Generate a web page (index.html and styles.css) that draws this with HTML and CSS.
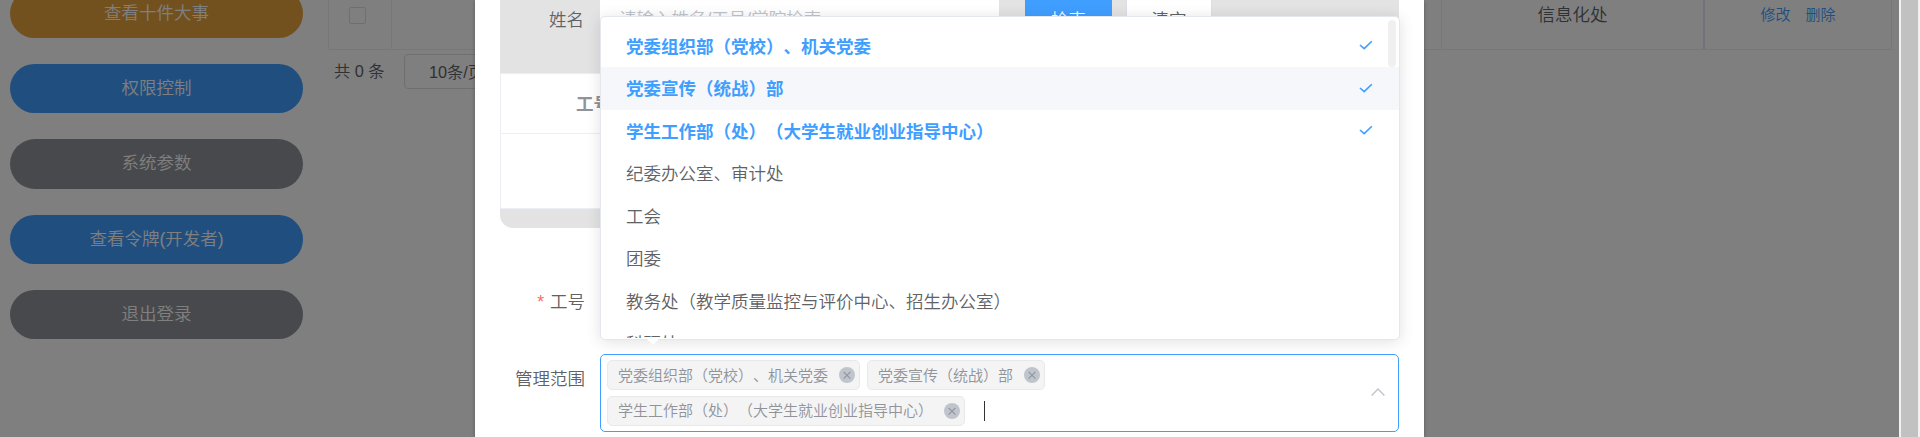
FILE: index.html
```html
<!DOCTYPE html>
<html lang="zh-CN">
<head>
<meta charset="utf-8">
<title>权限控制</title>
<link rel="stylesheet" href="styles.css">
</head>
<body>
<svg class="defs" aria-hidden="true">
  <symbol id="check" viewBox="0 0 14 10"><path d="M1 5l4.2 3.6L12.8 1.2" fill="none" stroke="currentColor" stroke-width="1.6"/></symbol>
  <symbol id="close" viewBox="0 0 16 16"><circle cx="8" cy="8" r="8" fill="#c0c4cc"/><path d="M4.6 4.9l6.8 6.8M11.4 4.9l-6.8 6.8" fill="none" stroke="#909399" stroke-width="1.1"/></symbol>
</svg>
<div class="page">
  <nav class="sidebar">
    <button class="nav-btn warning">查看十件大事</button>
    <button class="nav-btn primary">权限控制</button>
    <button class="nav-btn info">系统参数</button>
    <button class="nav-btn primary">查看令牌(开发者)</button>
    <button class="nav-btn info">退出登录</button>
  </nav>
  <main class="main">
    <div class="grid-row">
      <div class="cell"><span class="checkbox"></span></div>
      <div class="cell"></div>
      <div class="cell">信息化处</div>
      <div class="cell actions"><a>修改</a><a>删除</a></div>
    </div>
    <div class="pagination"><span class="total">共 0 条</span><span class="page-size">10条/页</span></div>
  </main>
</div>
<div class="overlay"></div>
<div class="scrollbar"><div class="scroll-thumb"></div></div>
<section class="dialog">
  <div class="panel">
    <div class="search-row">
      <label class="search-label">姓名</label>
      <div class="search-input">请输入姓名/工号/学院检索</div>
      <button class="btn btn-primary">检索</button>
      <button class="btn btn-plain">清空</button>
    </div>
    <div class="table">
      <div class="table-head">工号</div>
      <div class="table-body"></div>
    </div>
  </div>
  <div class="form-item item-id"><label class="form-label"><span class="star">*</span>工号</label></div>
  <div class="form-item">
    <label class="form-label">管理范围</label>
    <div class="select">
      <div class="tags">
        <span class="tag"><span class="tag-text">党委组织部（党校）、机关党委</span><svg class="close"><use href="#close"/></svg></span>
        <span class="tag"><span class="tag-text">党委宣传（统战）部</span><svg class="close"><use href="#close"/></svg></span>
        <span class="tag"><span class="tag-text">学生工作部（处）（大学生就业创业指导中心）</span><svg class="close"><use href="#close"/></svg></span>
        <span class="caret"></span>
      </div>
      <svg class="arrow" viewBox="0 0 14 8"><path d="M.6 7.4L7 1l6.4 6.4" fill="none" stroke="#c0c4cc" stroke-width="1.4"/></svg>
    </div>
  </div>
  <div class="dropdown">
    <ul class="options">
      <li class="option selected">党委组织部（党校）、机关党委<svg class="check"><use href="#check"/></svg></li>
      <li class="option selected hover">党委宣传（统战）部<svg class="check"><use href="#check"/></svg></li>
      <li class="option selected">学生工作部（处）（大学生就业创业指导中心）<svg class="check"><use href="#check"/></svg></li>
      <li class="option">纪委办公室、审计处</li>
      <li class="option">工会</li>
      <li class="option">团委</li>
      <li class="option">教务处（教学质量监控与评价中心、招生办公室）</li>
      <li class="option">科研处</li>
    </ul>
    <span class="list-thumb"></span>
    <span class="tip"></span>
  </div>
</section>
</body>
</html>
```
FILE: styles.css
```css
* { box-sizing: border-box; }
body {
  margin: 0;
  height: 437px;
  overflow: hidden;
  position: relative;
  background: #fff;
  color: #606266;
  font: 350 17.5px/1.2 "Liberation Sans", "Noto Sans CJK SC", sans-serif;
  text-spacing-trim: space-all;
}
button { font: inherit; border: 0; padding: 0; }
.defs { position: absolute; width: 0; height: 0; }

.page { display: flex; width: 1899px; height: 437px; overflow: hidden; }
.sidebar {
  width: 303px;
  padding-left: 10px;
  margin-top: -11.5px;
  display: flex;
  flex-direction: column;
  gap: 26px;
  flex-shrink: 0;
}
.nav-btn { height: 49.4px; border-radius: 25px; color: #fff; flex-shrink: 0; }
.warning { background: #e6a23c; }
.primary { background: #409eff; }
.info { background: #909399; }

.main { margin-left: 25px; width: 1564px; }
.grid-row {
  display: grid;
  grid-template-columns: 63px 1050px 263px 187px;
  width: 1564px;
  height: 50px;
  border-left: 1px solid #ebeef5;
  border-bottom: 1px solid #ebeef5;
}
.cell {
  display: flex;
  justify-content: center;
  height: 49px;
  padding-top: 5px;
  border-right: 1px solid #ebeef5;
}
.cell:nth-child(3) { border-right: 2px solid #e4e7f0; }
.actions { gap: 15px; font-size: 15px; color: #409eff; padding-top: 6px; }
.checkbox {
  width: 17px;
  height: 17px;
  margin: 2px 5px 0 0;
  border: 1px solid #dcdfe6;
  border-radius: 2px;
}
.pagination { display: flex; padding: 4px 0 0 6px; font-size: 16.25px; line-height: 35px; }
.total { width: 70px; }
.page-size {
  width: 138px;
  height: 35px;
  border: 1px solid #dcdfe6;
  border-radius: 4px;
  padding-left: 24px;
}

.overlay { position: absolute; inset: 0 21px 0 0; background: rgba(0, 0, 0, .5); }
.scrollbar {
  position: absolute;
  inset: 0 0 0 auto;
  width: 21px;
  padding: 0 2px;
  background: #f1f1f1;
}
.scroll-thumb { height: 100%; background: #c1c1c1; }

.dialog {
  position: absolute;
  left: 475px;
  top: 0;
  width: 949px;
  height: 437px;
  padding: 0 25px;
  background: #fff;
  box-shadow: 0 1px 4px rgba(0, 0, 0, .3);
}
.panel { height: 228px; background: #e3e3e3; border-radius: 0 0 13px 13px; overflow: hidden; }
.search-row { display: flex; height: 73px; }
.search-label { width: 100px; padding: 10px 16px 0 0; text-align: right; }
.search-input {
  width: 399px;
  height: 40px;
  padding: 9px 0 0 19px;
  background: #fff;
  color: #c0c4cc;
}
.btn { height: 40px; }
.btn-primary { width: 87px; margin-left: 26px; background: #409eff; color: #fff; }
.btn-plain { width: 86px; margin-left: 14px; background: #fff; border: solid #dcdfe6; border-width: 0 1px; color: #606266; }
.table { height: 136px; background: #fff; border: 1px solid #ebeef5; }
.table-head {
  height: 60px;
  padding: 20px 0 0 75px;
  border-bottom: 1px solid #ebeef5;
  color: #909399;
  font-weight: bold;
}

.form-item { display: flex; height: 78px; }
.item-id { height: 50px; margin: 49px 0 27px; }
.form-label { width: 100px; padding-right: 15px; text-align: right; line-height: 51px; }
.star { color: #f56c6c; margin-right: 6px; }
.select {
  width: 799px;
  height: 78px;
  display: flex;
  align-items: center;
  justify-content: space-between;
  padding: 0 13px 0 6px;
  border: 1px solid #409eff;
  border-radius: 5px;
}
.tags { display: flex; flex-wrap: wrap; gap: 5px 7px; width: 600px; height: 66px; }
.tag {
  display: flex;
  align-items: center;
  height: 30px;
  padding: 0 4px 0 10px;
  border: 1px solid #e9e9eb;
  border-radius: 5px;
  background: #f4f4f5;
  color: #909399;
  font-size: 15px;
  white-space: nowrap;
}
.tag-text { padding-top: 1px; }
.close { width: 16px; height: 16px; margin-left: 11px; }
.caret { width: 1px; height: 20px; margin: 5px 0 0 12px; background: #333; }
.arrow { width: 14px; height: 8px; margin-top: -2px; }

.dropdown {
  position: absolute;
  left: 125px;
  top: 16px;
  width: 800px;
  height: 324px;
  background: #fff;
  border: 1px solid #e4e7ed;
  border-radius: 5px;
  box-shadow: 0 2px 15px rgba(0, 0, 0, .12);
}
.options { margin: 0; padding: 7.5px 0 0; height: 321px; overflow: hidden; list-style: none; }
.option {
  display: flex;
  align-items: center;
  justify-content: space-between;
  height: 42.5px;
  padding: 3px 26px 0 25px;
}
.selected { color: #409eff; font-weight: bold; }
.hover { background: #f5f7fa; }
.check { width: 14px; height: 10px; margin-top: -4px; }
.list-thumb {
  position: absolute;
  top: 3px;
  right: 3px;
  width: 8px;
  height: 47px;
  border-radius: 4px;
  background: #f0f0f1;
}
.tip {
  position: absolute;
  left: 44px;
  top: 320px;
  border: solid transparent;
  border-width: 8px 8px 0;
  border-top-color: #fff;
}
```
